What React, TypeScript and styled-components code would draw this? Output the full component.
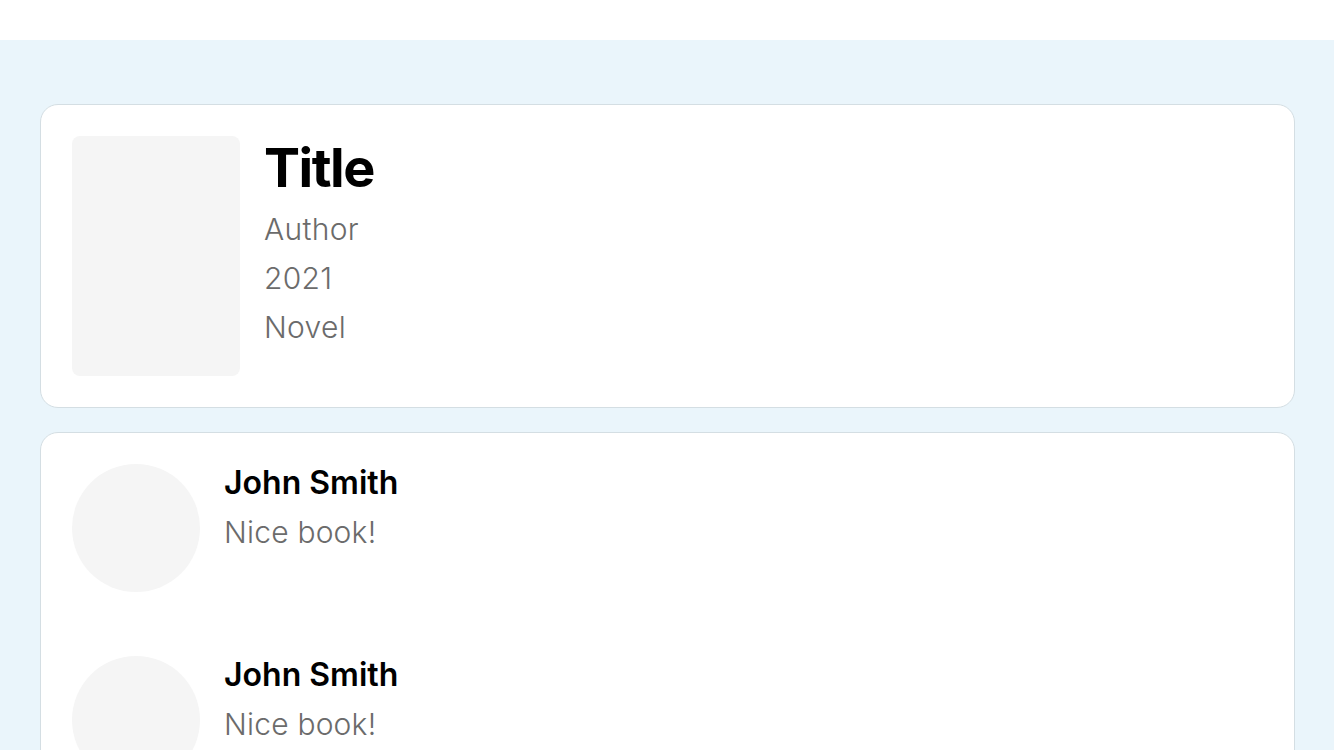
import React from "react";
import styled, { createGlobalStyle } from "styled-components";

const Global = createGlobalStyle`
  html, body { margin: 0; padding: 0; background: #ffffff; }
  body { font-family: Inter, "Noto Sans", sans-serif; }
  * { box-sizing: border-box; }
`;

const Page = styled.div`
  padding-top: 40px;
  background: #ffffff;
`;

const Main = styled.main`
  background: #eaf5fb;
  min-height: 710px;
  padding: 64px 39px 24px 40px;
  display: flex;
  flex-direction: column;
  gap: 24px;
`;

const Card = styled.section`
  background: #ffffff;
  border: 1px solid #d4dee3;
  border-radius: 18px;
  padding: 31px;
`;

const BookRow = styled.div`
  display: flex;
  gap: 24px;
`;

const Cover = styled.div`
  width: 168px;
  height: 240px;
  border-radius: 8px;
  background: #f5f5f5;
  flex-shrink: 0;
`;

const Info = styled.div`
  display: flex;
  flex-direction: column;
`;

const Title = styled.h1`
  margin: 0 0 6px;
  font-size: 54px;
  line-height: 63px;
  font-weight: 700;
  letter-spacing: -1.5px;
  color: #000000;
`;

const Meta = styled.div`
  font-size: 30px;
  line-height: 49px;
  font-weight: 300;
  letter-spacing: 0.3px;
  color: #6b6b6b;
`;

const CommentList = styled.div`
  display: flex;
  flex-direction: column;
  gap: 64px;
`;

const Comment = styled.div`
  display: flex;
  gap: 24px;
`;

const Avatar = styled.div`
  width: 128px;
  height: 128px;
  border-radius: 50%;
  background: #f5f5f5;
  flex-shrink: 0;
`;

const CommentBody = styled.div`
  display: flex;
  flex-direction: column;
  gap: 5px;
`;

const Name = styled.div`
  font-size: 32px;
  line-height: 38px;
  font-weight: 600;
  color: #000000;
`;

const Text = styled.div`
  font-size: 30px;
  line-height: 50px;
  font-weight: 300;
  letter-spacing: 0.2px;
  color: #6b6b6b;
`;

const comments = [
  { name: "John Smith", text: "Nice book!" },
  { name: "John Smith", text: "Nice book!" },
  { name: "John Smith", text: "Nice book!" },
];

export default function App() {
  return (
    <>
      <Global />
      <Page>
        <Main>
          <Card>
            <BookRow>
              <Cover />
              <Info>
                <Title>Title</Title>
                <Meta>Author</Meta>
                <Meta>2021</Meta>
                <Meta>Novel</Meta>
              </Info>
            </BookRow>
          </Card>
          <Card>
            <CommentList>
              {comments.map((c, i) => (
                <Comment key={i}>
                  <Avatar />
                  <CommentBody>
                    <Name>{c.name}</Name>
                    <Text>{c.text}</Text>
                  </CommentBody>
                </Comment>
              ))}
            </CommentList>
          </Card>
        </Main>
      </Page>
    </>
  );
}
